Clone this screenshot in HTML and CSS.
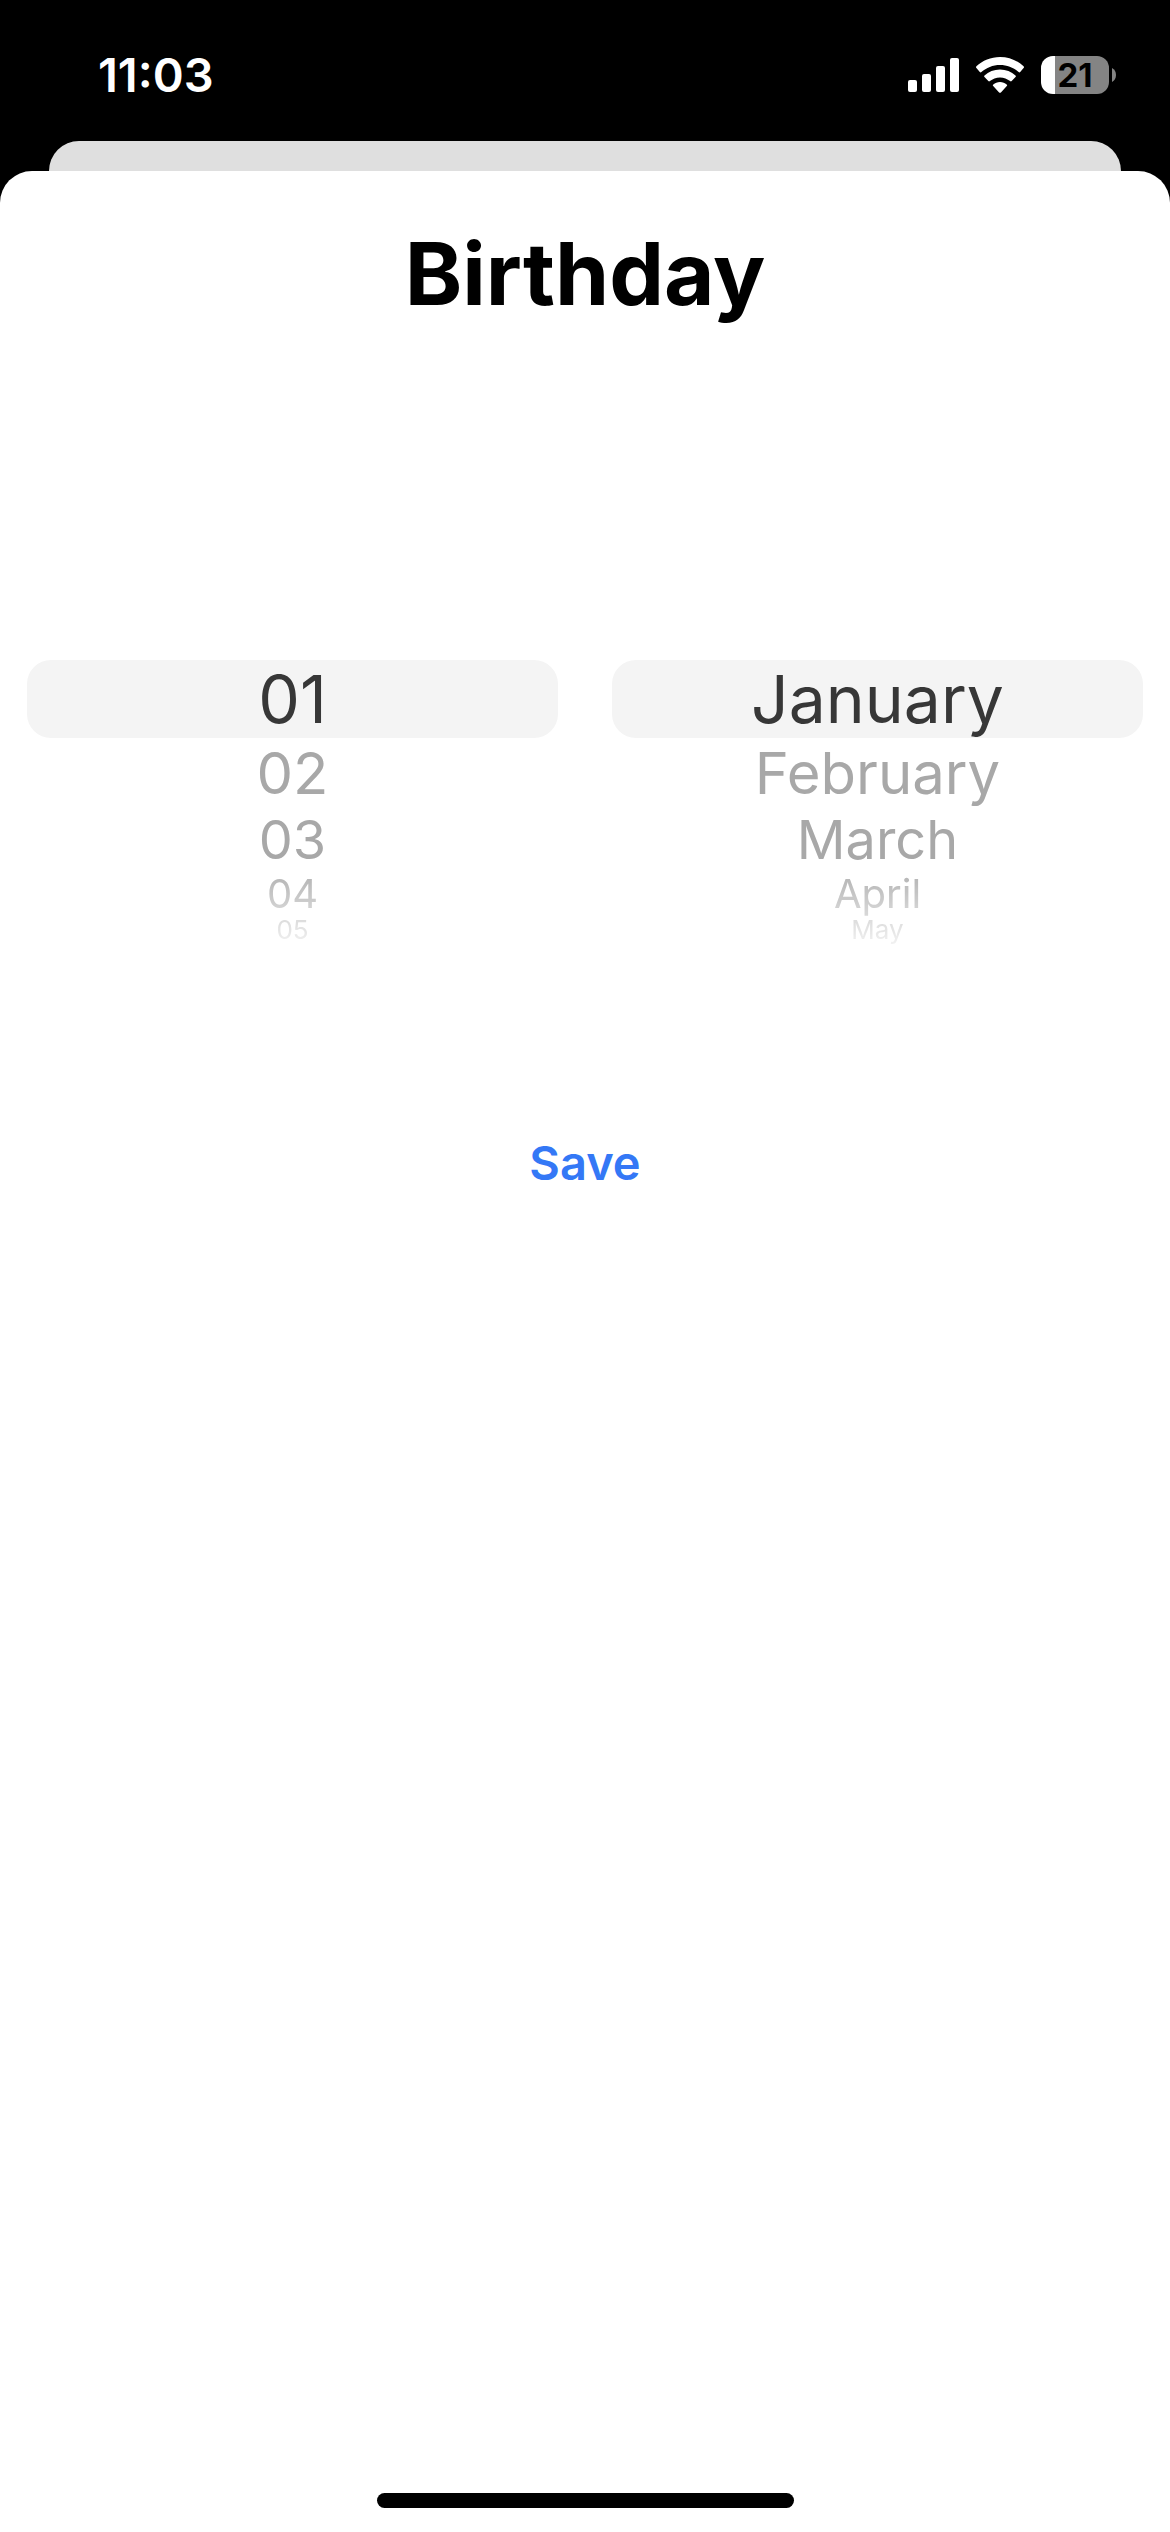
FILE: index.html
```html
<!DOCTYPE html>
<html lang="en">
<head>
  <meta charset="utf-8">
  <meta name="viewport" content="width=device-width, initial-scale=1">
  <title>Birthday</title>
  <link rel="stylesheet" href="styles.css">
</head>
<body>
  <header class="status-bar">
    <time class="clock">11:03</time>
    <div class="indicators">
      <svg class="signal" viewBox="0 0 51 34" role="img" aria-label="Signal strength">
        <rect x="0" y="22" width="9" height="12" rx="2"/>
        <rect x="14" y="16" width="9" height="18" rx="2"/>
        <rect x="28" y="8" width="9" height="26" rx="2"/>
        <rect x="42" y="0" width="9" height="34" rx="2"/>
      </svg>
      <svg class="wifi" viewBox="0 0 48 36" role="img" aria-label="Wi-Fi">
        <path d="M24 0C14.800 0 6.500 3.500 .4 9.300c-.5.500-.5 1.200 0 1.700l3.400 4c.5.500 1.100.5 1.600 0C10.300 10.600 16.800 7.900 24 7.900s13.700 2.700 18.600 7.100c.5.500 1.100.5 1.600 0l3.400-4c.5-.5.500-1.200 0-1.700C41.500 3.500 33.200 0 24 0z"/>
        <path d="M24 12.600c-6 0-11.400 2.200-15.500 5.800-.5.500-.5 1.200 0 1.700l3.800 3.900c.5.500 1.100.5 1.600.1C16.600 21.800 20.100 20.400 24 20.400s7.400 1.400 10.100 3.700c.5.400 1.100.4 1.600-.1l3.800-3.900c.5-.5.500-1.200 0-1.700-4.100-3.600-9.500-5.800-15.500-5.800z"/>
        <path d="M24 25c-2.600 0-4.900.9-6.700 2.400-.6.500-.6 1.200-.1 1.700l5.900 6.300c.5.600 1.300.6 1.800 0l5.900-6.300c.5-.5.500-1.200-.1-1.700C28.900 25.900 26.600 25 24 25z"/>
      </svg>
      <div class="battery">
        <span class="battery-level">21</span>
        <svg class="battery-cap" viewBox="0 0 4 14" aria-hidden="true">
          <path d="M0 0v14c2.500-1.200 4-4 4-7S2.500 1.200 0 0z"/>
        </svg>
      </div>
    </div>
  </header>

  <div class="sheet-behind"></div>

  <main class="sheet">
    <h1 class="title">Birthday</h1>
    <form class="birthday-form">
      <div class="pickers">
        <fieldset class="wheel" aria-label="Day">
          <label class="option selected"><input type="radio" name="day" value="1" checked>01</label>
          <label class="option near"><input type="radio" name="day" value="2">02</label>
          <label class="option middle"><input type="radio" name="day" value="3">03</label>
          <label class="option far"><input type="radio" name="day" value="4">04</label>
          <label class="option edge"><input type="radio" name="day" value="5">05</label>
        </fieldset>
        <fieldset class="wheel" aria-label="Month">
          <label class="option selected"><input type="radio" name="month" value="1" checked>January</label>
          <label class="option near"><input type="radio" name="month" value="2">February</label>
          <label class="option middle"><input type="radio" name="month" value="3">March</label>
          <label class="option far"><input type="radio" name="month" value="4">April</label>
          <label class="option edge"><input type="radio" name="month" value="5">May</label>
        </fieldset>
      </div>
      <button class="save" type="button">Save</button>
    </form>
    <div class="home-indicator"></div>
  </main>
</body>
</html>
```

FILE: styles.css
```css
* {
  box-sizing: border-box;
}

body {
  display: flex;
  flex-direction: column;
  min-height: 100vh;
  margin: 0;
  background: #000;
  color: #000;
  font-family: Inter, "Liberation Sans", sans-serif;
}

/* Status bar */
.status-bar {
  display: flex;
  align-items: center;
  justify-content: space-between;
  height: 141px;
  padding: 8px 54px 0 98px;
  color: #fff;
}

.clock {
  font-size: 47px;
  font-weight: 600;
  line-height: 56px;
}

.indicators {
  display: flex;
  align-items: center;
  gap: 17px;
}

.indicators svg {
  fill: #fff;
}

.signal {
  width: 51px;
  height: 34px;
}

.wifi {
  width: 48px;
  height: 36px;
}

.battery {
  display: flex;
  align-items: center;
  gap: 3px;
}

.battery-level {
  width: 68px;
  border-radius: 12px;
  background: linear-gradient(to right, #fff 14px, #848484 14px);
  color: #000;
  font-size: 33px;
  font-weight: 700;
  line-height: 38px;
  text-align: center;
}

.battery .battery-cap {
  width: 4px;
  height: 14px;
  fill: #848484;
}

/* Stacked sheets */
.sheet-behind {
  height: 60px;
  margin: 0 49px -30px;
  border-radius: 30px 30px 0 0;
  background: #dfdfdf;
}

.sheet {
  position: relative;
  display: flex;
  flex: 1;
  flex-direction: column;
  align-items: center;
  padding: 49px 0 24px;
  border-radius: 32px 32px 0 0;
  background: #fff;
}

.title {
  margin: 0;
  font-size: 87px;
  font-weight: 700;
  line-height: 108px;
}

.birthday-form {
  display: flex;
  flex-direction: column;
  align-items: center;
  width: 100%;
  padding-top: 332px;
}

/* Wheel pickers: rows shrink and fade toward the rim */
.pickers {
  display: grid;
  grid-template-columns: 1fr 1fr;
  width: 100%;
}

.wheel {
  display: flex;
  flex-direction: column;
  min-width: 0;
  margin: 0;
  padding: 0 27px 16px;
  border: 0;
  color: #a8a8a8;
  text-align: center;
  mask-image: linear-gradient(to bottom, #000 200px, transparent 300px);
}

.option input {
  position: absolute;
  margin: 0;
  opacity: 0;
}

.selected {
  border-radius: 24px;
  background: #f4f4f4;
  color: #373737;
  font-size: 66px;
  line-height: 78px;
}

.near {
  font-size: 58px;
  line-height: 70px;
}

.middle {
  font-size: 54px;
  line-height: 64px;
}

.far {
  font-size: 40px;
  line-height: 44px;
}

.edge {
  font-size: 26px;
  line-height: 28px;
}

.save {
  margin-top: 173px;
  padding: 0 24px;
  border: 0;
  background: none;
  color: #3478f6;
  font: inherit;
  font-size: 47px;
  font-weight: 600;
  line-height: 60px;
}

.home-indicator {
  width: 417px;
  height: 15px;
  margin-top: auto;
  border-radius: 8px;
  background: #000;
}
```
